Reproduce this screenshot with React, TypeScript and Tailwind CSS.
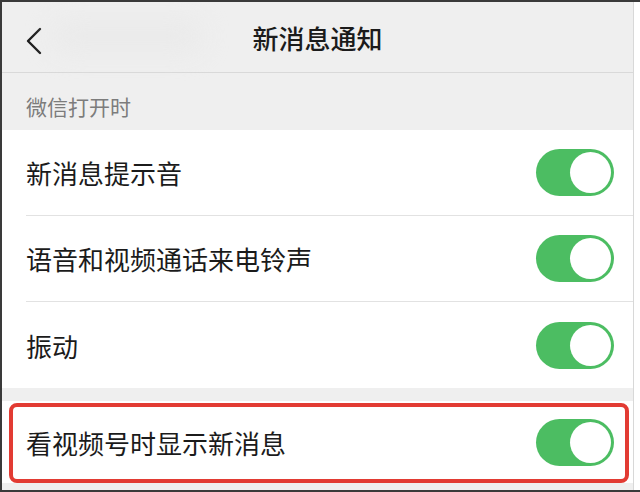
import React from "react";

const font = { fontFamily: '"Noto Sans CJK SC", "Noto Sans", sans-serif' };

function Toggle() {
  return (
    <div className="flex h-[47px] w-[78px] shrink-0 items-center justify-end rounded-full bg-[#4cbd62] pr-[3px]">
      <div className="h-[41px] w-[41px] rounded-full bg-white" />
    </div>
  );
}

function Row({ label, last }: { label: string; last?: boolean }) {
  return (
    <div className="flex h-[86px] bg-white pl-[24px]">
      <div
        className={`flex flex-1 items-center justify-between pr-[19px] ${
          last ? "" : "border-b border-[#e2e2e2]"
        }`}
      >
        <span className="text-[26px] text-[#1b1b1b]">{label}</span>
        <Toggle />
      </div>
    </div>
  );
}

export default function App() {
  return (
    <div
      className="h-[492px] w-[640px] overflow-hidden bg-white border-y-2 border-l-2 border-[#3a3a3a]"
      style={font}
    >
      <div className="flex h-full w-[632px] flex-col border-r border-[#d8d8d8] bg-[#efefef]">
        {/* HEADER */}
        <div className="relative flex h-[71px] shrink-0 items-center justify-center border-b border-[#d9d9d9]">
          <svg
            className="absolute left-[23px] top-[24px]"
            width="18"
            height="30"
            viewBox="0 0 18 30"
            fill="none"
          >
            <path d="M15 3 L3 15 L15 27" stroke="#1b1b1b" strokeWidth="2.4" strokeLinecap="round" strokeLinejoin="round" />
          </svg>
          <div className="absolute left-[50px] top-[18px] h-[32px] w-[150px] rounded-full bg-[#eaeaea] blur-md" />
          <span className="text-[26px] font-medium text-[#1b1b1b]">新消息通知</span>
        </div>

        {/* SECTION LABEL */}
        <div className="flex h-[57px] shrink-0 items-end pb-[8px] pl-[24px]">
          <span className="text-[21px] text-[#7c7c7c]">微信打开时</span>
        </div>

        <Row label="新消息提示音" />
        <Row label="语音和视频通话来电铃声" />
        <Row label="振动" last />

        <div className="h-[13px] shrink-0" />

        {/* HIGHLIGHTED ROW */}
        <div className="relative flex h-[82px] shrink-0 items-center justify-between bg-white pl-[24px] pr-[19px]">
          <div className="absolute left-[7px] right-[4px] top-[2px] bottom-[0px] rounded-[8px] border-[4px] border-[#e23b33]" />
          <span className="text-[26px] text-[#1b1b1b]">看视频号时显示新消息</span>
          <Toggle />
        </div>
      </div>
    </div>
  );
}
